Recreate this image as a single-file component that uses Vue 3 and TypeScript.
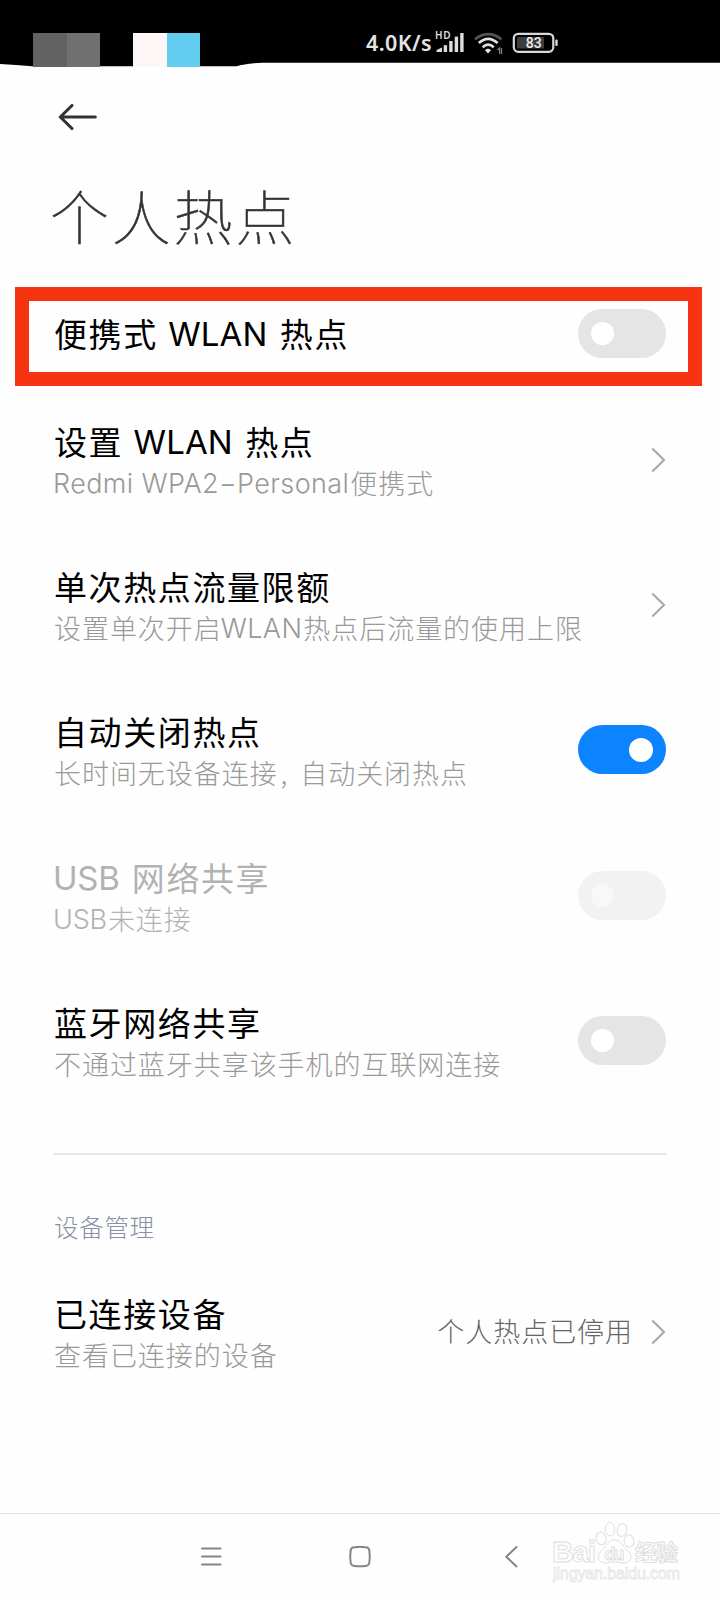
<script setup lang="ts">
interface Item {
  title: string
  note: string
  kind: 'link' | 'switch'
  on?: boolean
  disabled?: boolean
}

interface Run {
  text: string
  style: 'latin' | 'comma' | 'han'
}

const items: Item[] = [
  { title: '设置 WLAN 热点', note: 'Redmi WPA2−Personal便携式', kind: 'link' },
  { title: '单次热点流量限额', note: '设置单次开启WLAN热点后流量的使用上限', kind: 'link' },
  { title: '自动关闭热点', note: '长时间无设备连接, 自动关闭热点', kind: 'switch', on: true },
  { title: 'USB 网络共享', note: 'USB未连接', kind: 'switch', disabled: true },
  { title: '蓝牙网络共享', note: '不通过蓝牙共享该手机的互联网连接', kind: 'switch' },
]

// Splits mixed text so Latin runs get their own family and tracking.
function runs(text: string): Run[] {
  const parts = text.match(/[\x20-\x7e−]+|[^\x20-\x7e−]+/g) ?? []
  return parts.map((part) => ({
    text: part,
    style: part.startsWith(',') ? 'comma' : /[A-Za-z]/.test(part) ? 'latin' : 'han',
  }))
}
</script>

<template>
  <div class="screen">
    <header class="status">
      <svg class="status-bg" width="720" height="68" viewBox="0 0 720 68">
        <defs>
          <linearGradient id="fade" x1="0" x2="1" y1="0" y2="0">
            <stop offset="0" stop-color="#000" />
            <stop offset="1" stop-color="#000" stop-opacity="0" />
          </linearGradient>
        </defs>
        <path d="M0 0H720V62.8H262Q244 63.5 236 66.3H32Q16 65 0 64Z" fill="#000" />
        <path d="M234 62H268Q248 63.5 236 66.3Z" fill="url(#fade)" />
        <rect x="33" y="33" width="34" height="34" fill="#626262" />
        <rect x="67" y="33" width="33" height="34" fill="#707070" />
        <rect x="133" y="33" width="34" height="34" fill="#fef7f7" />
        <rect x="167" y="33" width="33" height="34" fill="#63cdf0" />
      </svg>
      <span class="speed">4.0K/s</span>
      <svg class="status-icons" width="132" height="32" viewBox="432 28 132 32">
        <text x="435" y="39" class="hd" textLength="15.5">HD</text>
        <g fill="#dcdcdc">
          <path d="M436.5 52V50L442 47.5V52Z" />
          <rect x="443.7" y="45.2" width="3.4" height="6.8" />
          <rect x="449.2" y="41" width="3.4" height="11" />
          <rect x="454.7" y="36.6" width="3.4" height="15.4" />
          <rect x="460.2" y="33" width="3.4" height="19" />
        </g>
        <g fill="none" stroke="#e2e2e2" stroke-width="2.6">
          <path d="M475 39.2Q488 29.2 501.5 39.2" stroke="#555" />
          <path d="M478.8 43Q488 34.6 497.6 43" />
          <path d="M482.7 47.2Q488 42 493.8 47.2" />
        </g>
        <path d="M485 50.2Q488 47.5 491 50.2L488 53.5Z" fill="#e8e8e8" />
        <path d="M499.6 54V48L497.4 50.2M501.5 48V54" fill="none" stroke="#888" stroke-width="1.2" />
        <rect x="513.8" y="33.8" width="39.5" height="18" rx="4.5" fill="none" stroke="#d9d9d9" stroke-width="2.2" />
        <rect x="517" y="37" width="27" height="11.5" rx="1" fill="#3d3d3d" />
        <rect x="555.3" y="39.5" width="2.4" height="6.5" rx="1" fill="#d9d9d9" />
        <text x="533.7" y="48.2" class="level" text-anchor="middle">83</text>
      </svg>
    </header>

    <nav class="back">
      <svg width="42" height="30" viewBox="57 102 42 30" fill="none" stroke="#333" stroke-width="3.1" stroke-linecap="round" stroke-linejoin="round">
        <path d="M72 105.5L60.3 117L72 128.5M60.3 117H95.3" />
      </svg>
    </nav>
    <h1>个人热点</h1>

    <section class="marked">
      <span class="title"><span v-for="(run, i) in runs('便携式 WLAN 热点')" :key="i" :class="run.style">{{ run.text }}</span></span>
      <span class="switch"><i></i></span>
    </section>

    <main>
      <div v-for="item in items" :key="item.title" class="row" :class="{ disabled: item.disabled }">
        <div class="text">
          <span class="title"><span v-for="(run, i) in runs(item.title)" :key="i" :class="run.style">{{ run.text }}</span></span>
          <span class="note"><span v-for="(run, i) in runs(item.note)" :key="i" :class="run.style">{{ run.text }}</span></span>
        </div>
        <svg v-if="item.kind === 'link'" class="chevron" width="16" height="28" viewBox="0 0 16 28">
          <path d="M2.3 2.5L14 14L2.3 25.5" />
        </svg>
        <span v-else class="switch" :class="{ on: item.on }"><i></i></span>
      </div>
    </main>

    <hr />
    <h2>设备管理</h2>
    <div class="row devices">
      <div class="text">
        <span class="title">已连接设备</span>
        <span class="note">查看已连接的设备</span>
      </div>
      <span class="value">个人热点已停用</span>
      <svg class="chevron" width="16" height="28" viewBox="0 0 16 28">
        <path d="M2.3 2.5L14 14L2.3 25.5" />
      </svg>
    </div>

    <footer>
      <svg width="720" height="86" viewBox="0 1514 720 86" fill="none">
        <g stroke="#858585" stroke-width="2" stroke-linecap="round" stroke-linejoin="round">
          <path d="M202 1548.5H220.5M202 1556.5H220.5M202 1564.5H220.5" />
          <path d="M354.5 1547.2Q360 1546.3 365.5 1547.2Q369.2 1547.3 369.4 1551Q370.2 1556.5 369.4 1562Q369.2 1565.8 365.5 1565.9Q360 1566.8 354.5 1565.9Q350.8 1565.8 350.6 1562Q349.8 1556.5 350.6 1551Q350.8 1547.3 354.5 1547.2Z" />
          <path d="M516.5 1547L506.3 1556.7L516.5 1566.5" />
        </g>
        <g class="mark">
          <text x="552" y="1562" class="mark-main" textLength="44">Bai</text>
          <g fill="#fefefe">
            <ellipse cx="601" cy="1538.5" rx="5" ry="6.5" transform="rotate(-12 601 1538.5)" />
            <ellipse cx="610" cy="1529.2" rx="4.8" ry="6.8" />
            <ellipse cx="622" cy="1530" rx="4.8" ry="6.5" transform="rotate(12 622 1530)" />
            <ellipse cx="629" cy="1541" rx="4.8" ry="6.2" transform="rotate(-12 629 1541)" />
            <path d="M614.5 1539.8C621 1539.8 623 1547 628 1551C634 1556 631 1563.5 623 1563C617 1561.5 612 1561.5 607 1563C598 1563.5 595.5 1556 602 1550.5C607 1546 608 1539.8 614.5 1539.8Z" />
          </g>
          <text x="604.5" y="1559.5" class="mark-du" textLength="20">du</text>
          <text x="635" y="1560" class="mark-cjk" textLength="43">经验</text>
          <text x="553" y="1579" class="mark-url" textLength="127">jingyan.baidu.com</text>
        </g>
      </svg>
    </footer>
  </div>
</template>

<style>
body {
  margin: 0;
  background: #fefefe;
}
</style>

<style scoped>
.screen {
  width: 720px;
  height: 1600px;
  overflow: hidden;
  display: flex;
  flex-direction: column;
  background: #fefefe;
  color: #000;
  font-family: "Noto Sans CJK SC", sans-serif;
}
.status {
  position: relative;
  flex: none;
  height: 68px;
}
.status-bg {
  position: absolute;
  left: 0;
  top: 0;
}
.speed {
  position: absolute;
  left: 366px;
  top: 28px;
  font: 600 21.5px/30px "Noto Sans", sans-serif;
  letter-spacing: 0.4px;
  color: #e4e4e4;
}
.status-icons {
  position: absolute;
  left: 432px;
  top: 28px;
}
.hd {
  font: 600 10px "Noto Sans", sans-serif;
  fill: #dedede;
}
.level {
  font: 500 14px Roboto, sans-serif;
  fill: #eee;
}
.back {
  flex: none;
  height: 30px;
  padding: 34px 0 0 57px;
}
.back svg {
  display: block;
}
h1 {
  flex: none;
  margin: 39px 0 3px 50px;
  height: 88px;
  font-size: 59px;
  line-height: 88px;
  font-weight: 100;
  letter-spacing: 2.8px;
  color: #333;
  -webkit-text-stroke: 0.6px #333;
}
.marked {
  flex: none;
  box-sizing: border-box;
  width: 686.5px;
  height: 99px;
  margin: 25px 0 0 15px;
  padding: 0 21.5px 7px 25px;
  border: 14px solid #f73411;
  display: flex;
  align-items: center;
  justify-content: space-between;
}
.marked .title {
  margin-top: -1px;
}
.row {
  box-sizing: border-box;
  height: 145.2px;
  padding: 0 54px;
  display: flex;
  align-items: center;
}
.text {
  flex: 1;
  display: flex;
  flex-direction: column;
  padding-top: 5px;
}
.title {
  height: 44px;
  font-size: 33px;
  line-height: 44px;
  font-weight: 400;
  letter-spacing: 1.6px;
  white-space: pre;
}
.note {
  height: 40px;
  font-size: 27px;
  line-height: 40px;
  font-weight: 300;
  letter-spacing: 0.95px;
  color: #999;
  white-space: pre;
}
.latin {
  position: relative;
  top: -1px;
  left: -1px;
  font-family: Inter, sans-serif;
}
.title .latin {
  letter-spacing: 0.1px;
  word-spacing: 2px;
}
.note .latin {
  letter-spacing: 0.4px;
}
.comma {
  padding: 0 5px 0 3px;
}
.disabled .title,
.disabled .note {
  color: #b2b2b2;
}
.disabled .latin {
  letter-spacing: -0.2px;
}
.switch {
  flex: none;
  box-sizing: border-box;
  width: 88.5px;
  height: 49px;
  padding: 0 13px;
  border-radius: 25px;
  background: #e5e5e5;
  display: flex;
  align-items: center;
}
.row .switch,
.row .chevron {
  margin-top: 2px;
}
.switch i {
  width: 23px;
  height: 23px;
  border-radius: 50%;
  background: #fff;
}
.switch.on {
  background: #0d84ff;
  justify-content: flex-end;
}
.switch.on i {
  width: 24px;
  height: 24px;
}
.disabled .switch {
  background: #f2f2f2;
}
.disabled .switch i {
  background: #f8f8f8;
}
.chevron {
  flex: none;
  fill: none;
  stroke: #aaa;
  stroke-width: 2.2;
}
hr {
  flex: none;
  width: 614px;
  height: 2px;
  margin: 41px 0 0 53px;
  border: 0;
  background: #e8e8e8;
}
h2 {
  flex: none;
  margin: 52px 0 0 54px;
  font-size: 24.5px;
  line-height: 40px;
  font-weight: 300;
  letter-spacing: 0.7px;
  color: #8790a5;
}
.devices {
  flex: none;
  margin-top: 11px;
}
.value {
  margin: 1px 17px 0 0;
  font-size: 27px;
  line-height: 40px;
  font-weight: 300;
  letter-spacing: 0.95px;
  color: #666;
}
footer {
  flex: none;
  height: 86px;
  margin-top: auto;
  border-top: 1px solid #e3e3e3;
}
footer svg {
  display: block;
}
.mark {
  stroke: #dedede;
  stroke-width: 1;
}
.mark text {
  fill: #fefefe;
}
.mark-main {
  font: 700 30px "Liberation Sans", sans-serif;
}
.mark-du {
  font: 700 18px "Liberation Sans", sans-serif;
}
.mark-cjk {
  font: 700 22px "Noto Sans CJK SC", sans-serif;
}
.mark .mark-url {
  font: 400 16px "Liberation Sans", sans-serif;
  stroke: #e6e6e6;
  stroke-width: 0.8;
}
</style>
